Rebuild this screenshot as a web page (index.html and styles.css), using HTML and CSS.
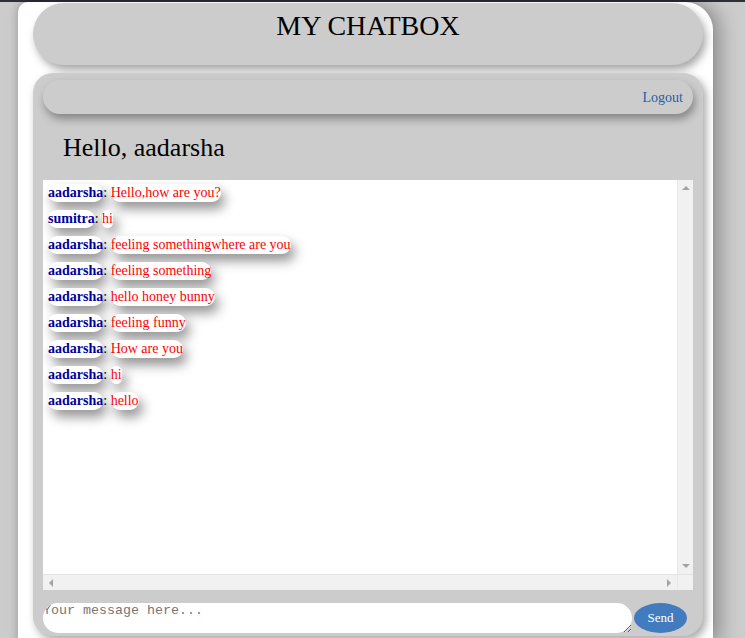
FILE: index.html
```html
<!DOCTYPE html>
<html>
<head>
<meta charset="utf-8">
<title>My Chatbox</title>
<link rel="stylesheet" href="styles.css">
</head>
<body>
<div class="topline"></div>
<div class="wrapper">
  <div class="header"><h1 class="title">MY CHATBOX</h1></div>
  <div class="panel">
    <div class="logout-bar"><a class="logout" href="#">Logout</a></div>
    <h2 class="hello">Hello, aadarsha</h2>
    <div class="chat">
      <div class="messages">
        <div class="msg"><span class="user">aadarsha</span>: <span class="text">Hello,how are you?</span></div>
        <div class="msg"><span class="user">sumitra</span>: <span class="text">hi</span></div>
        <div class="msg"><span class="user">aadarsha</span>: <span class="text">feeling somethingwhere are you</span></div>
        <div class="msg"><span class="user">aadarsha</span>: <span class="text">feeling something</span></div>
        <div class="msg"><span class="user">aadarsha</span>: <span class="text">hello honey bunny</span></div>
        <div class="msg"><span class="user">aadarsha</span>: <span class="text">feeling funny</span></div>
        <div class="msg"><span class="user">aadarsha</span>: <span class="text">How are you</span></div>
        <div class="msg"><span class="user">aadarsha</span>: <span class="text">hi</span></div>
        <div class="msg"><span class="user">aadarsha</span>: <span class="text">hello</span></div>
      </div>
      <div class="vbar"><span class="arrow up"></span><span class="arrow down"></span></div>
      <div class="hbar"><span class="arrow left"></span><span class="arrow right"></span></div>
      <div class="corner"></div>
    </div>
    <div class="composer">
      <textarea class="input" placeholder="Your message here..."></textarea>
      <button class="send">Send</button>
    </div>
  </div>
</div>
</body>
</html>
```
FILE: styles.css
```css
html, body {
  margin: 0;
  padding: 0;
  background: #cccccc;
  overflow: hidden;
  font-family: "Liberation Serif", "Times New Roman", serif;
}
.topline {
  height: 2px;
  background: #2e3038;
}
.wrapper {
  margin: 0 32px 0 18px;
  background: #ffffff;
  border-radius: 10px 28px 0 0;
  padding: 1px 10px 0 15px;
  height: 640px;
  box-shadow: 8px 0 18px rgba(0, 0, 0, 0.28), -2px 0 6px rgba(0, 0, 0, 0.12);
}
.header {
  height: 62px;
  background: #cccccc;
  border-radius: 31px;
  box-shadow: 3px 5px 9px rgba(0, 0, 0, 0.35);
  text-align: center;
}
.title {
  margin: 0;
  padding-top: 6px;
  font-size: 28px;
  line-height: 34px;
  font-weight: normal;
  color: #000;
}
.panel {
  margin-top: 8px;
  background: #cccccc;
  border-radius: 20px;
  padding: 7px 10px 3px;
  box-shadow: 3px 4px 9px rgba(0, 0, 0, 0.35);
}
.logout-bar {
  height: 34px;
  background: #cccccc;
  border-radius: 17px;
  box-shadow: 2px 5px 8px rgba(0, 0, 0, 0.35);
  text-align: right;
  padding-right: 10px;
  line-height: 34px;
}
.logout {
  color: #1b62a6;
  text-decoration: none;
  font-size: 14px;
}
.hello {
  margin: 19px 0 17px;
  padding-left: 20px;
  font-size: 26px;
  line-height: 30px;
  font-weight: normal;
  color: #000;
}
.chat {
  height: 410px;
  background: #ffffff;
  display: grid;
  grid-template-columns: 1fr 16px;
  grid-template-rows: 1fr 16px;
  font-size: 14px;
}
.messages {
  padding: 4px 5px;
  overflow: hidden;
}
.msg {
  height: 26px;
  line-height: 18px;
  white-space: nowrap;
}
.user, .text {
  display: inline-block;
  background: #ffffff;
  border-radius: 9px;
  box-shadow: 4px 7px 12px rgba(0, 0, 0, 0.42);
  padding: 0;
}
.user {
  color: #000099;
  font-weight: bold;
}
.text {
  color: #ff0000;
}
.vbar {
  background: #f1f1f1;
  border-left: 1px solid #e8e8e8;
  display: flex;
  flex-direction: column;
  justify-content: space-between;
  align-items: center;
  padding: 6px 0;
}
.hbar {
  background: #f1f1f1;
  border-top: 1px solid #e4e4e4;
  display: flex;
  justify-content: space-between;
  align-items: center;
  padding: 0 6px;
}
.corner {
  background: #f1f1f1;
  border-top: 1px solid #e4e4e4;
  border-left: 1px solid #e8e8e8;
}
.arrow {
  width: 0;
  height: 0;
  border-style: solid;
}
.up {
  border-width: 0 4px 4px;
  border-color: transparent transparent #a3a3a3;
}
.down {
  border-width: 4px 4px 0;
  border-color: #a3a3a3 transparent transparent;
}
.left {
  border-width: 4px 4px 4px 0;
  border-color: transparent #a3a3a3 transparent transparent;
}
.right {
  border-width: 4px 0 4px 4px;
  border-color: transparent transparent transparent #a3a3a3;
}
.composer {
  margin-top: 13px;
  display: flex;
  gap: 2px;
  align-items: flex-start;
}
.input {
  width: 589px;
  height: 30px;
  box-sizing: border-box;
  border: none;
  border-radius: 15px;
  padding: 0;
  font-family: "Liberation Mono", "Courier New", monospace;
  font-size: 13.33px;
  background: #ffffff;
  outline: none;
}
.input::placeholder {
  color: #757575;
}
.send {
  width: 53px;
  height: 30px;
  border: none;
  border-radius: 50%;
  background: #437bbf;
  color: #ffffff;
  font-family: "Liberation Serif", "Times New Roman", serif;
  font-size: 13px;
  padding: 0;
}
```
